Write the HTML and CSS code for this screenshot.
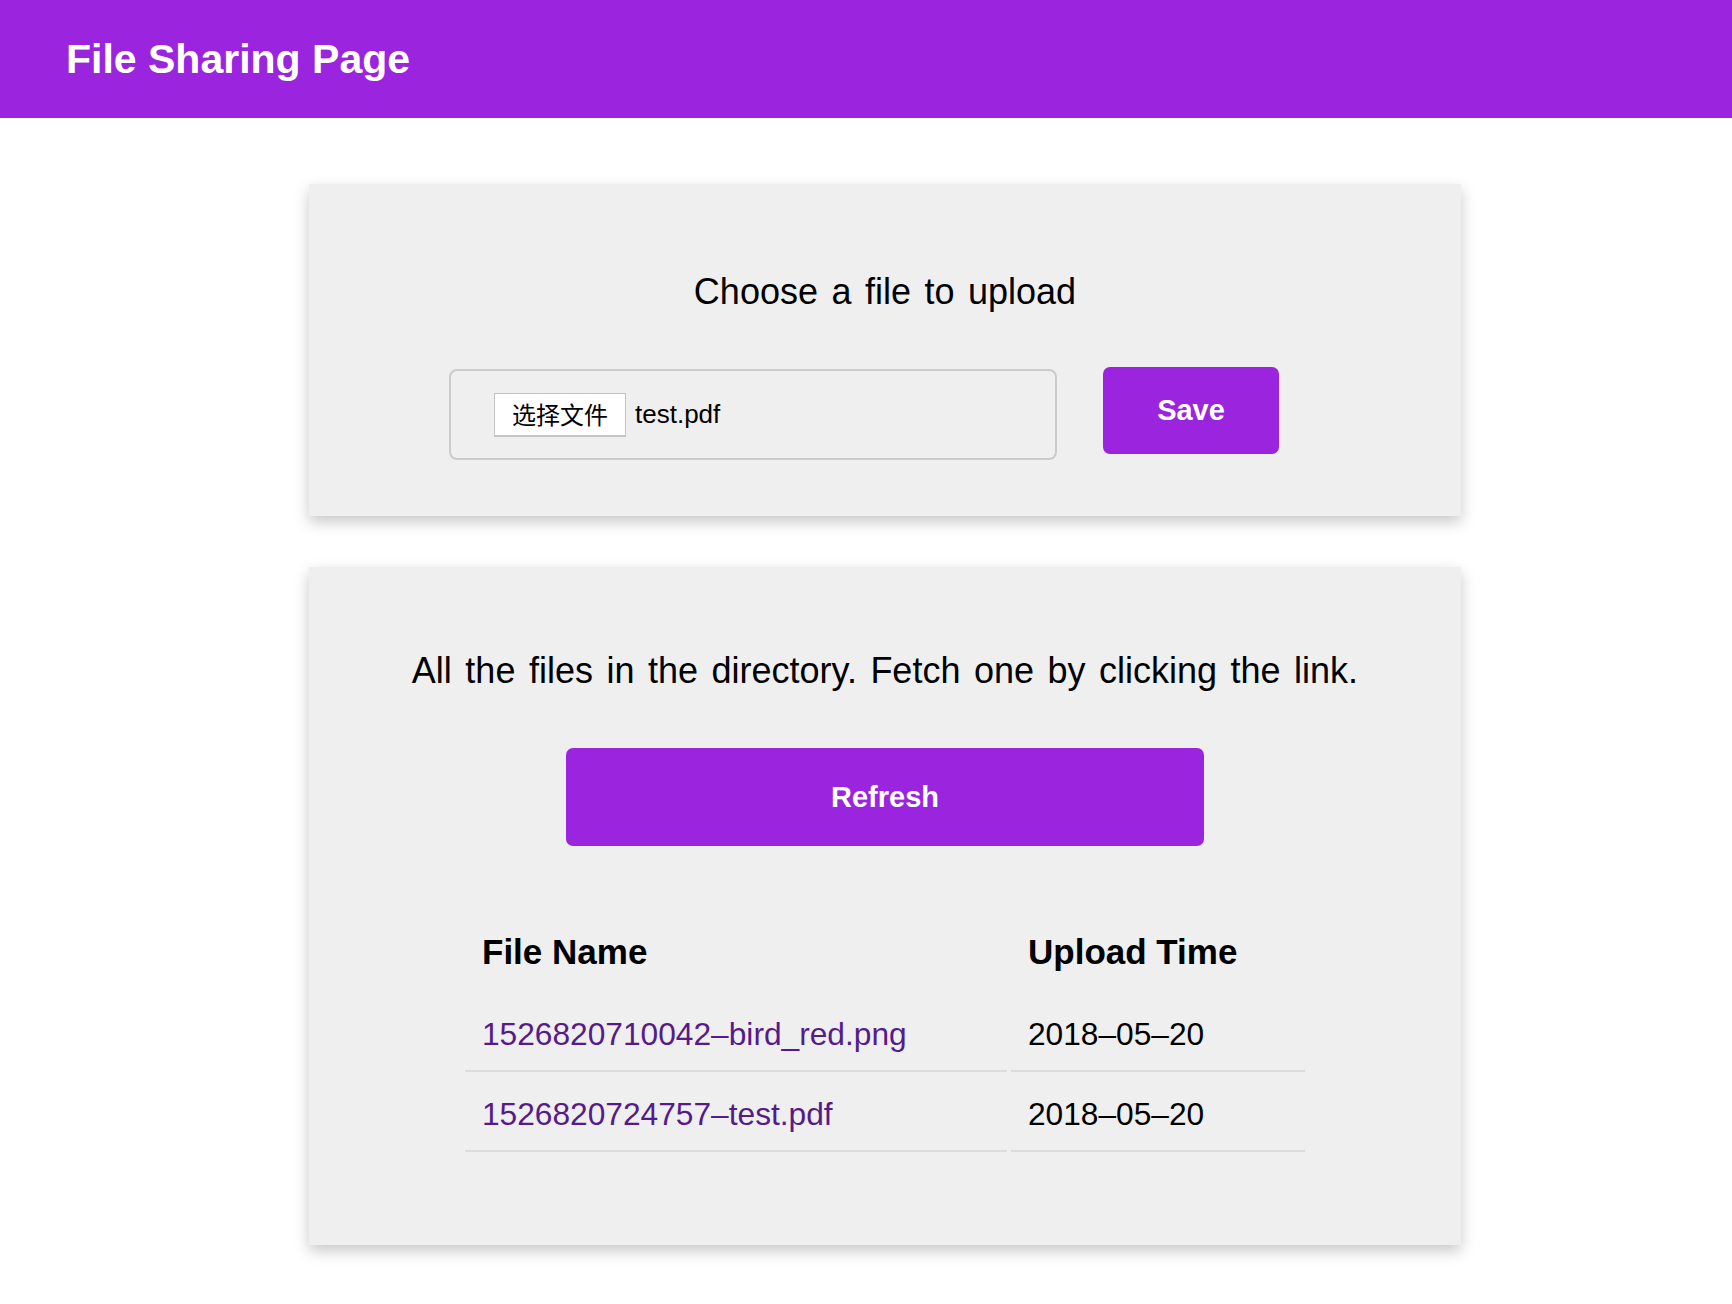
FILE: index.html
```html
<!DOCTYPE html>
<html lang="en">
<head>
<meta charset="utf-8">
<title>File Sharing Page</title>
<link rel="stylesheet" href="styles.css">
</head>
<body>
<header class="topbar">
  <h1 class="brand">File Sharing Page</h1>
</header>
<main class="content">
  <section class="card upload-card">
    <h2 class="card-title">Choose a file to upload</h2>
    <form class="upload-row">
      <div class="file-box">
        <label class="file-button">选择文件</label>
        <span class="file-name">test.pdf</span>
      </div>
      <button type="button" class="btn save-btn">Save</button>
    </form>
  </section>
  <section class="card list-card">
    <h2 class="card-title">All the files in the directory. Fetch one by clicking the link.</h2>
    <button type="button" class="btn refresh-btn">Refresh</button>
    <table class="files">
      <thead>
        <tr><th class="col-name">File Name</th><th class="col-time">Upload Time</th></tr>
      </thead>
      <tbody>
        <tr><td><a class="file-link" href="#">1526820710042–bird_red.png</a></td><td>2018–05–20</td></tr>
        <tr><td><a class="file-link" href="#">1526820724757–test.pdf</a></td><td>2018–05–20</td></tr>
      </tbody>
    </table>
  </section>
</main>
</body>
</html>
```
FILE: styles.css
```css
html, body {
  margin: 0;
  padding: 0;
  background: #ffffff;
}
body {
  font-family: "Liberation Sans", Arial, "Noto Sans CJK SC", sans-serif;
  color: #000;
}
.topbar {
  height: 118px;
  background: #9b24df;
  display: flex;
  align-items: center;
  padding-left: 66px;
}
.brand {
  margin: 0;
  font-size: 41px;
  font-weight: bold;
  color: #ffffff;
}
.content {
  display: flex;
  flex-direction: column;
  align-items: center;
  padding: 66px 0 60px 38px;
  gap: 51px;
}
.card {
  width: 1152px;
  box-sizing: border-box;
  background: #efefef;
  box-shadow: 0 6px 14px rgba(0, 0, 0, 0.22);
}
.card-title {
  margin: 0;
  font-size: 36px;
  font-weight: normal;
  line-height: 40px;
  word-spacing: 3.5px;
  text-align: center;
}
.upload-card {
  height: 332px;
  padding-top: 88px;
}
.upload-row {
  margin: 55px 0 0 0;
  padding-left: 140px;
  display: flex;
  align-items: flex-start;
}
.file-box {
  margin-top: 2px;
  width: 608px;
  height: 91px;
  box-sizing: border-box;
  border: 2px solid #cbcbcb;
  border-radius: 8px;
  display: flex;
  align-items: center;
  padding-left: 43px;
}
.file-button {
  box-sizing: border-box;
  height: 44px;
  width: 132px;
  display: flex;
  align-items: center;
  justify-content: center;
  background: #ffffff;
  border: 1px solid #c4c4c4;
  border-bottom-width: 2px;
  font-family: "Noto Sans CJK SC", sans-serif;
  font-size: 24px;
  line-height: 1;
  color: #000;
}
.file-name {
  margin-left: 9px;
  font-size: 26px;
}
.btn {
  border: none;
  background: #9b24df;
  color: #ffffff;
  font-family: "Liberation Sans", Arial, sans-serif;
  font-weight: bold;
  font-size: 29px;
  border-radius: 7px;
  padding: 0;
}
.save-btn {
  margin-left: 46px;
  width: 176px;
  height: 87px;
}
.list-card {
  height: 678px;
  padding-top: 84px;
  display: flex;
  flex-direction: column;
  align-items: center;
}
.refresh-btn {
  margin-top: 57px;
  width: 638px;
  height: 98px;
}
.files {
  margin-top: 62px;
  border-collapse: separate;
  border-spacing: 4px;
  table-layout: fixed;
  width: 848px;
}
.files th {
  text-align: left;
  font-size: 35px;
  font-weight: bold;
  line-height: 40px;
  padding: 20px 0 20px 17px;
}
.col-name { width: 525px; }
.col-time { width: 277px; }
.files td {
  font-size: 31.7px;
  line-height: 37px;
  padding: 20px 0 17px 17px;
  border-bottom: 2px solid #dcdcdc;
}
.file-link {
  color: #551a8b;
  text-decoration: none;
}
```
